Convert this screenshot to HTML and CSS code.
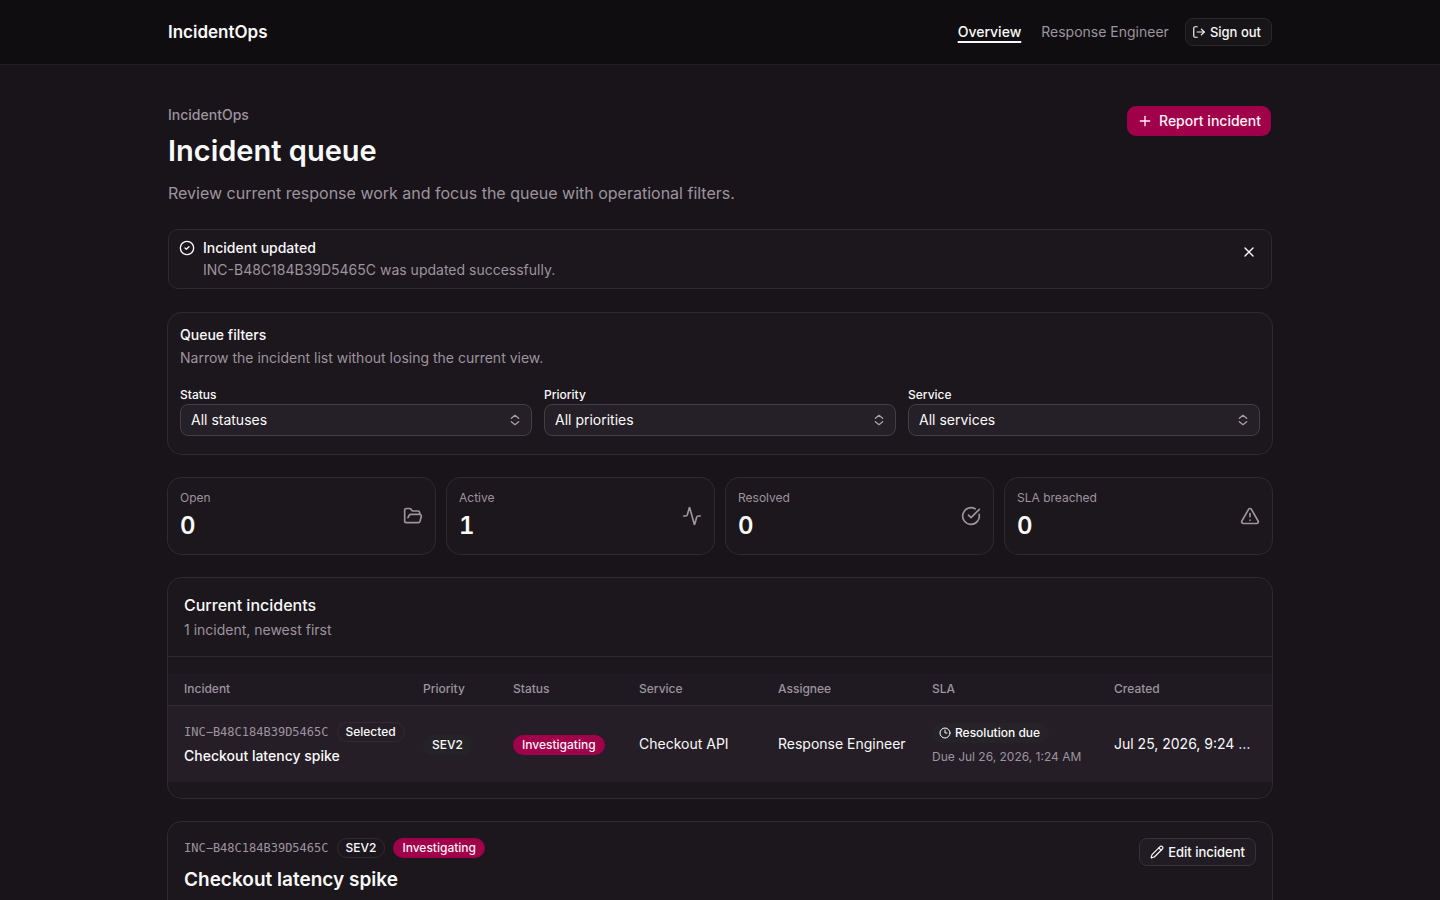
FILE: index.html
```html
<!DOCTYPE html>
<html lang="en">
<head>
    <meta charset="UTF-8">
    <meta name="viewport" content="width=device-width, initial-scale=1.0">
    <title>Incident queue - IncidentOps</title>
    <link rel="stylesheet" href="styles.css">
</head>
<body>
    <header class="site-header">
        <div class="container header-inner">
            <a href="#" class="brand">IncidentOps</a>
            <nav class="site-nav">
                <a href="#" class="nav-link">Overview</a>
                <span class="user-name">Response Engineer</span>
                <button type="button" class="button button-outline sign-out">
                    <svg class="icon" viewBox="0 0 24 24"><path d="m16 17 5-5-5-5"/><path d="M21 12H9"/><path d="M9 21H5a2 2 0 0 1-2-2V5a2 2 0 0 1 2-2h4"/></svg>
                    Sign out
                </button>
            </nav>
        </div>
    </header>

    <main class="container main">
        <div class="page-heading">
            <div>
                <p class="eyebrow">IncidentOps</p>
                <h1>Incident queue</h1>
                <p class="lead">Review current response work and focus the queue with operational filters.</p>
            </div>
            <button type="button" class="button button-primary">
                <svg class="icon" viewBox="0 0 24 24"><path d="M5 12h14"/><path d="M12 5v14"/></svg>
                Report incident
            </button>
        </div>

        <div class="alert" role="status">
            <svg class="icon alert-icon" viewBox="0 0 24 24"><circle cx="12" cy="12" r="10"/><path d="m9 12 2 2 4-4"/></svg>
            <div>
                <p class="alert-title">Incident updated</p>
                <p class="muted">INC-B48C184B39D5465C was updated successfully.</p>
            </div>
            <button type="button" class="close-button" aria-label="Dismiss">
                <svg class="icon" viewBox="0 0 24 24"><path d="M18 6 6 18"/><path d="m6 6 12 12"/></svg>
            </button>
        </div>

        <section class="card filters">
            <h2 class="filters-title">Queue filters</h2>
            <p class="muted">Narrow the incident list without losing the current view.</p>
            <form class="filter-grid">
                <div>
                    <label for="status">Status</label>
                    <div class="select-wrap">
                        <select id="status">
                            <option>All statuses</option>
                        </select>
                        <svg class="icon" viewBox="0 0 24 24"><path d="m6.5 14.5 5.5 4.5 5.5-4.5"/><path d="m6.5 9.500 5.5-4.5 5.5 4.5"/></svg>
                    </div>
                </div>
                <div>
                    <label for="priority">Priority</label>
                    <div class="select-wrap">
                        <select id="priority">
                            <option>All priorities</option>
                        </select>
                        <svg class="icon" viewBox="0 0 24 24"><path d="m6.5 14.5 5.5 4.5 5.5-4.5"/><path d="m6.5 9.500 5.5-4.5 5.5 4.5"/></svg>
                    </div>
                </div>
                <div>
                    <label for="service">Service</label>
                    <div class="select-wrap">
                        <select id="service">
                            <option>All services</option>
                        </select>
                        <svg class="icon" viewBox="0 0 24 24"><path d="m6.5 14.5 5.5 4.5 5.5-4.5"/><path d="m6.5 9.500 5.5-4.5 5.5 4.5"/></svg>
                    </div>
                </div>
            </form>
        </section>

        <section class="stats">
            <div class="card stat">
                <div>
                    <p class="stat-label">Open</p>
                    <p class="stat-value">0</p>
                </div>
                <svg class="icon" viewBox="0 0 24 24"><path d="m6 14 1.5-2.9A2 2 0 0 1 9.24 10H20a2 2 0 0 1 1.94 2.5l-1.54 6a2 2 0 0 1-1.95 1.5H4a2 2 0 0 1-2-2V5a2 2 0 0 1 2-2h3.9a2 2 0 0 1 1.69.9l.81 1.2a2 2 0 0 0 1.67.9H18a2 2 0 0 1 2 2v2"/></svg>
            </div>
            <div class="card stat">
                <div>
                    <p class="stat-label">Active</p>
                    <p class="stat-value">1</p>
                </div>
                <svg class="icon" viewBox="0 0 24 24"><path d="M22 12h-2.48a2 2 0 0 0-1.93 1.46l-2.35 8.36a.25.25 0 0 1-.48 0L9.24 2.18a.25.25 0 0 0-.48 0l-2.35 8.36A2 2 0 0 1 4.49 12H2"/></svg>
            </div>
            <div class="card stat">
                <div>
                    <p class="stat-label">Resolved</p>
                    <p class="stat-value">0</p>
                </div>
                <svg class="icon" viewBox="0 0 24 24"><path d="M21.801 10A10 10 0 1 1 17 3.335"/><path d="m9 11 3 3L22 4"/></svg>
            </div>
            <div class="card stat">
                <div>
                    <p class="stat-label">SLA breached</p>
                    <p class="stat-value">0</p>
                </div>
                <svg class="icon" viewBox="0 0 24 24"><path d="m21.73 18-8-14a2 2 0 0 0-3.48 0l-8 14A2 2 0 0 0 4 21h16a2 2 0 0 0 1.73-3"/><path d="M12 9v4"/><path d="M12 17h.01"/></svg>
            </div>
        </section>

        <section class="card incidents">
            <div class="incidents-header">
                <h2>Current incidents</h2>
                <p class="muted">1 incident, newest first</p>
            </div>
            <table class="incident-table">
                <colgroup>
                    <col class="col-incident">
                    <col class="col-priority">
                    <col class="col-status">
                    <col class="col-service">
                    <col class="col-assignee">
                    <col class="col-sla">
                    <col class="col-created">
                </colgroup>
                <thead>
                    <tr>
                        <th>Incident</th>
                        <th>Priority</th>
                        <th>Status</th>
                        <th>Service</th>
                        <th>Assignee</th>
                        <th>SLA</th>
                        <th>Created</th>
                    </tr>
                </thead>
                <tbody>
                    <tr class="selected">
                        <td>
                            <div class="badge-row">
                                <span class="incident-id">INC−B48C184B39D5465C</span>
                                <span class="badge badge-outline">Selected</span>
                            </div>
                            <a href="#" class="incident-link">Checkout latency spike</a>
                        </td>
                        <td><span class="badge badge-secondary">SEV2</span></td>
                        <td><span class="badge badge-primary">Investigating</span></td>
                        <td>Checkout API</td>
                        <td>Response Engineer</td>
                        <td>
                            <div class="sla">
                                <span class="badge badge-secondary badge-icon">
                                    <svg class="icon" viewBox="0 0 24 24"><circle cx="12" cy="12" r="10"/><path d="M12 6v6h4"/></svg>
                                    Resolution due
                                </span>
                                <span class="sla-due">Due Jul 26, 2026, 1:24 AM</span>
                            </div>
                        </td>
                        <td class="created">Jul 25, 2026, 9:24 PM</td>
                    </tr>
                </tbody>
            </table>
        </section>

        <section class="card detail">
            <div>
                <div class="badge-row">
                    <span class="incident-id">INC−B48C184B39D5465C</span>
                    <span class="badge badge-outline">SEV2</span>
                    <span class="badge badge-primary">Investigating</span>
                </div>
                <h2 class="detail-title">Checkout latency spike</h2>
            </div>
            <button type="button" class="button button-outline">
                <svg class="icon" viewBox="0 0 24 24"><path d="M21.174 6.812a1 1 0 0 0-3.986-3.987L3.842 16.174a2 2 0 0 0-.5.83l-1.321 4.352a.5.5 0 0 0 .623.622l4.353-1.32a2 2 0 0 0 .83-.497z"/><path d="m15 5 4 4"/></svg>
                Edit incident
            </button>
        </section>
    </main>
</body>
</html>
```
FILE: styles.css
```css
:root {
    --page: #19141a;
    --header: #0f0d0f;
    --card: #1c161d;
    --line: #2f2930;
    --text: #fafafa;
    --muted: #9d949e;
    --primary: #a0004a;
}

* {
    box-sizing: border-box;
}

body {
    margin: 0;
    background-color: var(--page);
    color: var(--text);
    font-family: Inter, "Liberation Sans", sans-serif;
    font-size: 14px;
    line-height: 20px;
}

h1, h2, p {
    margin: 0;
}

a {
    color: inherit;
    text-decoration: none;
}

.container {
    max-width: 1152px;
    margin: 0 auto;
    padding: 0 24px;
}

.icon {
    width: 16px;
    height: 16px;
    flex-shrink: 0;
    fill: none;
    stroke: currentColor;
    stroke-width: 2;
    stroke-linecap: round;
    stroke-linejoin: round;
}

.muted {
    color: var(--muted);
}

/* header */
.site-header {
    background-color: var(--header);
    border-bottom: 1px solid #221d23;
}

.header-inner {
    display: flex;
    align-items: center;
    justify-content: space-between;
    height: 64px;
}

.brand {
    font-size: 17px;
    font-weight: 600;
    line-height: 28px;
}

.site-nav {
    display: flex;
    align-items: center;
    gap: 16px;
}

.nav-link {
    margin-right: 4px;
    font-weight: 500;
    text-decoration: underline;
    text-decoration-thickness: 2px;
    text-underline-offset: 4px;
}

.user-name {
    color: var(--muted);
}

/* buttons */
.button {
    display: inline-flex;
    align-items: center;
    flex-shrink: 0;
    border: 1px solid transparent;
    border-radius: 8px;
    background-clip: padding-box;
    color: var(--text);
    font-family: inherit;
    font-weight: 500;
    line-height: 20px;
    cursor: pointer;
}

.button-primary {
    gap: 6px;
    height: 32px;
    padding: 0 10px;
    border-radius: 10px;
    background-color: var(--primary);
    color: #fdf2f8;
    font-size: 14px;
}

.button-outline {
    gap: 4px;
    height: 28px;
    padding: 0 10px;
    border-color: #38323a;
    background-color: #211c23;
    font-size: 13px;
}

.button-outline .icon {
    width: 14px;
    height: 14px;
}

.sign-out {
    padding-left: 6px;
    border-color: #2c282d;
    background-color: #171517;
}

.main {
    display: flex;
    flex-direction: column;
    gap: 24px;
    padding-top: 40px;
    padding-bottom: 40px;
}

.page-heading {
    display: flex;
    align-items: flex-start;
    justify-content: space-between;
}

.eyebrow {
    color: var(--muted);
    font-weight: 500;
}

h1 {
    margin-top: 8px;
    font-size: 29px;
    font-weight: 600;
    line-height: 36px;
}

.lead {
    margin-top: 12px;
    color: var(--muted);
    font-size: 16px;
    line-height: 24px;
}

/* alert */
.alert {
    position: relative;
    display: flex;
    gap: 8px;
    padding: 8px 10px;
    border: 1px solid var(--line);
    border-radius: 10px;
    background-color: var(--card);
}

.alert-icon {
    margin-top: 2px;
}

.alert-title {
    margin-bottom: 2px;
    font-weight: 500;
}

.close-button {
    position: absolute;
    top: 8px;
    right: 8px;
    display: flex;
    align-items: center;
    justify-content: center;
    width: 28px;
    height: 28px;
    padding: 0;
    border: none;
    background: none;
    color: var(--text);
    cursor: pointer;
}

.card {
    border-radius: 14px;
    background-color: var(--card);
    box-shadow: 0 0 0 1px var(--line);
}

/* filters */
.filters {
    padding: 12px 12px 18px;
}

.filters-title {
    margin-bottom: 4px;
    font-size: 14px;
    font-weight: 500;
    line-height: 19px;
}

.filter-grid {
    display: grid;
    grid-template-columns: repeat(3, 1fr);
    gap: 12px;
    margin-top: 18px;
}

label {
    display: block;
    font-size: 12px;
    font-weight: 500;
    line-height: 18px;
}

.select-wrap {
    position: relative;
}

.select-wrap .icon {
    position: absolute;
    top: 8px;
    right: 9px;
    color: #a89ea9;
    pointer-events: none;
}

select {
    display: block;
    width: 100%;
    height: 32px;
    padding: 0 32px 0 10px;
    border: 1px solid #443d46;
    border-radius: 8px;
    background-color: #252027;
    color: var(--text);
    font-family: inherit;
    font-size: 14px;
    line-height: 20px;
    appearance: none;
}

/* stats */
.stats {
    display: grid;
    grid-template-columns: repeat(4, 1fr);
    gap: 12px;
}

.stat {
    display: flex;
    align-items: center;
    justify-content: space-between;
    padding: 12px;
}

.stat .icon {
    width: 20px;
    height: 20px;
    color: var(--muted);
}

.stat-label {
    color: var(--muted);
    font-size: 12px;
    line-height: 16px;
}

.stat-value {
    margin-top: 4px;
    font-size: 24px;
    font-weight: 600;
    line-height: 32px;
    font-variant-numeric: tabular-nums;
}

/* incidents */
.incidents {
    padding-bottom: 16px;
}

.incidents-header {
    margin-bottom: 16px;
    padding: 16px;
    border-bottom: 1px solid var(--line);
}

.incidents-header h2 {
    margin-bottom: 4px;
    font-size: 16px;
    font-weight: 500;
    line-height: 22px;
}

.incident-table {
    width: 100%;
    table-layout: fixed;
    border-collapse: separate;
    border-spacing: 0;
}

.col-incident { width: 247px; }
.col-priority { width: 90px; }
.col-status { width: 126px; }
.col-service { width: 139px; }
.col-assignee { width: 154px; }
.col-sla { width: 182px; }
.col-created { width: 166px; }

th {
    height: 33px;
    padding: 0 8px;
    border-bottom: 1px solid #332c34;
    background-color: #1f1a21;
    color: var(--muted);
    font-size: 12px;
    font-weight: 500;
    line-height: 16px;
    text-align: left;
}

td {
    padding: 16px 8px;
    white-space: nowrap;
}

th:first-child, td:first-child {
    padding-left: 16px;
}

th:last-child, td:last-child {
    padding-right: 16px;
}

.selected td {
    background-color: #251e27;
}

.created {
    overflow: hidden;
    text-overflow: ellipsis;
}

.badge-row {
    display: flex;
    align-items: center;
    gap: 8px;
}

.incident-id {
    color: var(--muted);
    font-family: "DejaVu Sans Mono", monospace;
    font-size: 12px;
    line-height: 16px;
}

.incident-link {
    display: block;
    margin-top: 4px;
    font-weight: 500;
}

.badge {
    display: inline-flex;
    align-items: center;
    gap: 4px;
    height: 20px;
    padding: 0 8px;
    border: 1px solid transparent;
    border-radius: 10px;
    font-size: 12px;
    font-weight: 500;
    line-height: 16px;
    vertical-align: middle;
}

.badge-outline {
    border-color: #312a33;
}

.badge-primary {
    background-color: var(--primary);
    color: #fdf2f8;
}

.badge-secondary {
    background-color: #262328;
}

.badge-icon {
    padding-left: 6px;
}

.badge .icon {
    width: 12px;
    height: 12px;
}

.sla {
    display: flex;
    flex-direction: column;
    align-items: flex-start;
    gap: 6px;
}

.sla-due {
    color: var(--muted);
    font-size: 12px;
    line-height: 16px;
}

/* detail */
.detail {
    display: flex;
    align-items: flex-start;
    justify-content: space-between;
    min-height: 160px;
    padding: 16px;
}

.detail-title {
    margin-top: 8px;
    font-size: 19px;
    font-weight: 600;
    line-height: 28px;
}
```
